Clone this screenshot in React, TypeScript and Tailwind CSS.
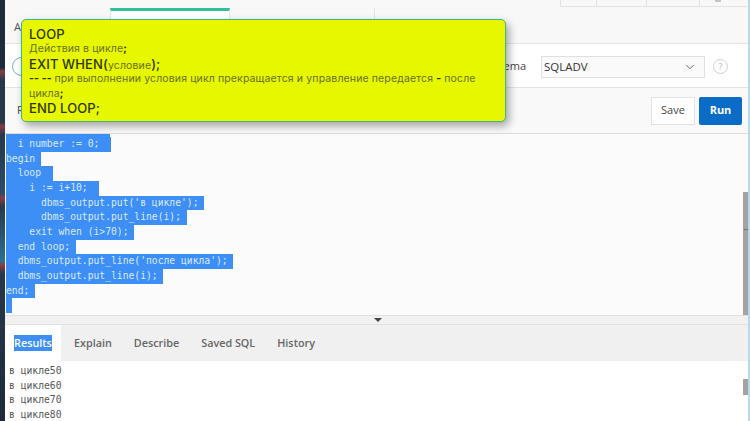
import React from 'react';
import { ChevronDown } from 'lucide-react';

const codeLines = [
    '  i number := 0;  ',
    'begin ',
    '  loop  ',
    '    i := i+10;  ',
    "      dbms_output.put('в цикле'); ",
    '      dbms_output.put_line(i); ',
    '    exit when (i>70); ',
    '  end loop; ',
    "  dbms_output.put_line('после цикла'); ",
    '  dbms_output.put_line(i); ',
    'end; ',
    ' ',
];

const resultLines = ['в цикле50', 'в цикле60', 'в цикле70', 'в цикле80'];

const tabs = ['Explain', 'Describe', 'Saved SQL', 'History'];

const mono = { fontFamily: '"DejaVu Sans Mono", monospace' };

const App: React.FC = () => {
    return (
        <div className="relative flex h-[421px] w-[750px] overflow-hidden bg-white font-['Open_Sans',sans-serif]">
            {/* Left window edge */}
            <div className="h-full w-[5px] shrink-0 bg-[linear-gradient(180deg,#1d2b3c_0%,#1d2b3c_16%,#8a3a44_17%,#27384a_19%,#27384a_29%,#8a3a44_30%,#27384a_32%,#2c4a6a_46%,#8a3a44_47%,#27384a_49%,#2f6f8f_62%,#8a3a44_63%,#27384a_65%,#1d2b3c_100%)]" />

            <div className="flex min-w-0 flex-1 flex-col">
                {/* Top tab strip */}
                <div className="flex h-[44px] shrink-0 border-b border-[#e4e4e4] bg-[#f8f8f8]">
                    <div className="flex w-[105px] items-center pl-[9px] pt-[11px] text-[11px] text-[#555]">A</div>
                    <div className="mt-[8px] h-[36px] w-[120px] border-t-[3px] border-x border-x-[#e6e6e6] border-t-[#2fbf9b] bg-white" />
                    <div className="ml-[144px] mt-[8px] w-px bg-[#e4e4e4]" />
                    <div className="ml-auto mr-[3px] flex h-[7px]">
                        <div className="w-[37px] border-x border-b border-[#e2e2e2]" />
                        <div className="w-[50px] border-r border-b border-[#e2e2e2]" />
                        <div className="w-[53px] border-r border-b border-[#e2e2e2]" />
                        <div className="w-[47px] border-b border-[#e2e2e2] pl-[15px]">
                            <div className="h-[2px] w-[6px] bg-[#c4c4c4]" />
                        </div>
                    </div>
                </div>

                {/* Schema row */}
                <div className="flex h-[44px] shrink-0 items-center border-b border-[#e4e4e4] bg-white pr-[22px] pt-[2px]">
                    <div className="ml-[7px] size-[19px] rounded-full border border-[#7fb3b3]" />
                    <span className="ml-auto text-[11px] text-[#444]">ema</span>
                    <div className="ml-[15px] flex h-[22px] w-[164px] items-center justify-between border border-[#e0e0e0] bg-[#fafafa] pl-[2px] pr-[7px] text-[11.5px] text-[#333]">
                        SQLADV
                        <ChevronDown size={14} strokeWidth={1.5} className="text-[#555]" />
                    </div>
                    <div className="ml-[8px] flex size-[15px] items-center justify-center rounded-full border border-[#cfcfcf] text-[9px] text-[#b5b5b5]">?</div>
                </div>

                {/* Actions row */}
                <div className="flex h-[46px] shrink-0 items-center border-b border-[#dcdcdc] bg-[#f9f9f9] pr-[8px]">
                    <span className="ml-[12px] text-[11px] text-[#444]">R</span>
                    <button className="ml-auto h-[28px] w-[44px] border border-[#e2e2e2] bg-white text-[11px] text-[#444]">Save</button>
                    <button className="ml-[4px] h-[28px] w-[43px] rounded-[2px] bg-[#0a6cc7] text-[11px] font-bold text-white">Run</button>
                </div>

                {/* SQL editor */}
                <div className="relative h-[181px] shrink-0 overflow-hidden bg-[#fbfbfb]">
                    <div className="ml-px h-[3px] w-[104px] bg-[#3d8ff5]" />
                    {codeLines.map((line, i) => (
                        <div
                            key={i}
                            style={mono}
                            className="ml-px h-[14.67px] w-fit whitespace-pre bg-[#3d8ff5] text-[9.7px] leading-[14.67px] text-[#dbe9ff]"
                        >
                            {line}
                        </div>
                    ))}
                    {/* Editor scrollbar and resize cursor */}
                    <div className="absolute right-[1px] top-[58px] h-[123px] w-[6px] bg-[#a3a3a3]" />
                    <div className="absolute right-0 top-[90px] text-[8px] leading-none text-[#444]">↔</div>
                </div>

                {/* Splitter */}
                <div className="flex h-[10px] shrink-0 items-center justify-center border-y border-[#e2e2e2] bg-[#f1f1f1]">
                    <div className="size-0 border-x-[4px] border-t-[4px] border-x-transparent border-t-[#444]" />
                </div>

                {/* Result tabs */}
                <div className="flex h-[36px] shrink-0 items-center bg-[#f0f0f0] text-[10.8px] font-semibold text-[#666]">
                    <div className="flex h-full w-[56px] items-center justify-center bg-white">
                        <span className="bg-[#3d8ff5] text-white">Results</span>
                    </div>
                    <div className="ml-[13px] flex gap-[22px]">
                        {tabs.map((tab) => (
                            <span key={tab}>{tab}</span>
                        ))}
                    </div>
                </div>

                {/* Output */}
                <div className="relative flex-1 bg-white pl-[4px] pt-[3px]">
                    {resultLines.map((line) => (
                        <div key={line} style={mono} className="h-[14.67px] text-[9.7px] leading-[14.67px] text-[#555]">
                            {line}
                        </div>
                    ))}
                    <div className="absolute right-[1px] top-[18px] h-[16px] w-[6px] bg-[#a3a3a3]" />
                </div>
            </div>

            {/* Right window edge */}
            <div className="absolute right-0 top-0 h-full w-[2px] bg-[#b5dbe8]" />

            {/* Yellow callout over the page */}
            <div className="absolute left-[21px] top-[19px] h-[103px] w-[485px] rounded-[5px] border border-[#3fb58f] bg-[#e6f700] pl-[7px] pr-[20px] pt-[7px] text-[10.5px] leading-[14.67px] tracking-[0.13px] text-[#67701a] shadow-[3px_4px_8px_rgba(0,0,0,0.35)] font-['Inter',sans-serif]">
                <div className="h-[15px] text-[13px] font-medium text-[#2f3500]">LOOP</div>
                <div className="h-[15px]">Действия в цикле<b className="font-bold text-[#2f3500]">;</b></div>
                <div className="h-[15px]">
                    <span className="text-[13px] font-medium text-[#2f3500]">EXIT WHEN(</span>условие<span className="text-[13px] font-medium text-[#2f3500]">);</span>
                </div>
                <div className="h-[29px]">
                    <span className="font-bold text-[#2f3500]">-- -- </span>при выполнении условия цикл прекращается и управление передается <span className="font-bold text-[#2f3500]">-</span> после цикла<b className="font-bold text-[#2f3500]">;</b>
                </div>
                <div className="h-[15px] text-[13px] font-medium text-[#2f3500]">END LOOP;</div>
            </div>
        </div>
    );
};

export default App;
